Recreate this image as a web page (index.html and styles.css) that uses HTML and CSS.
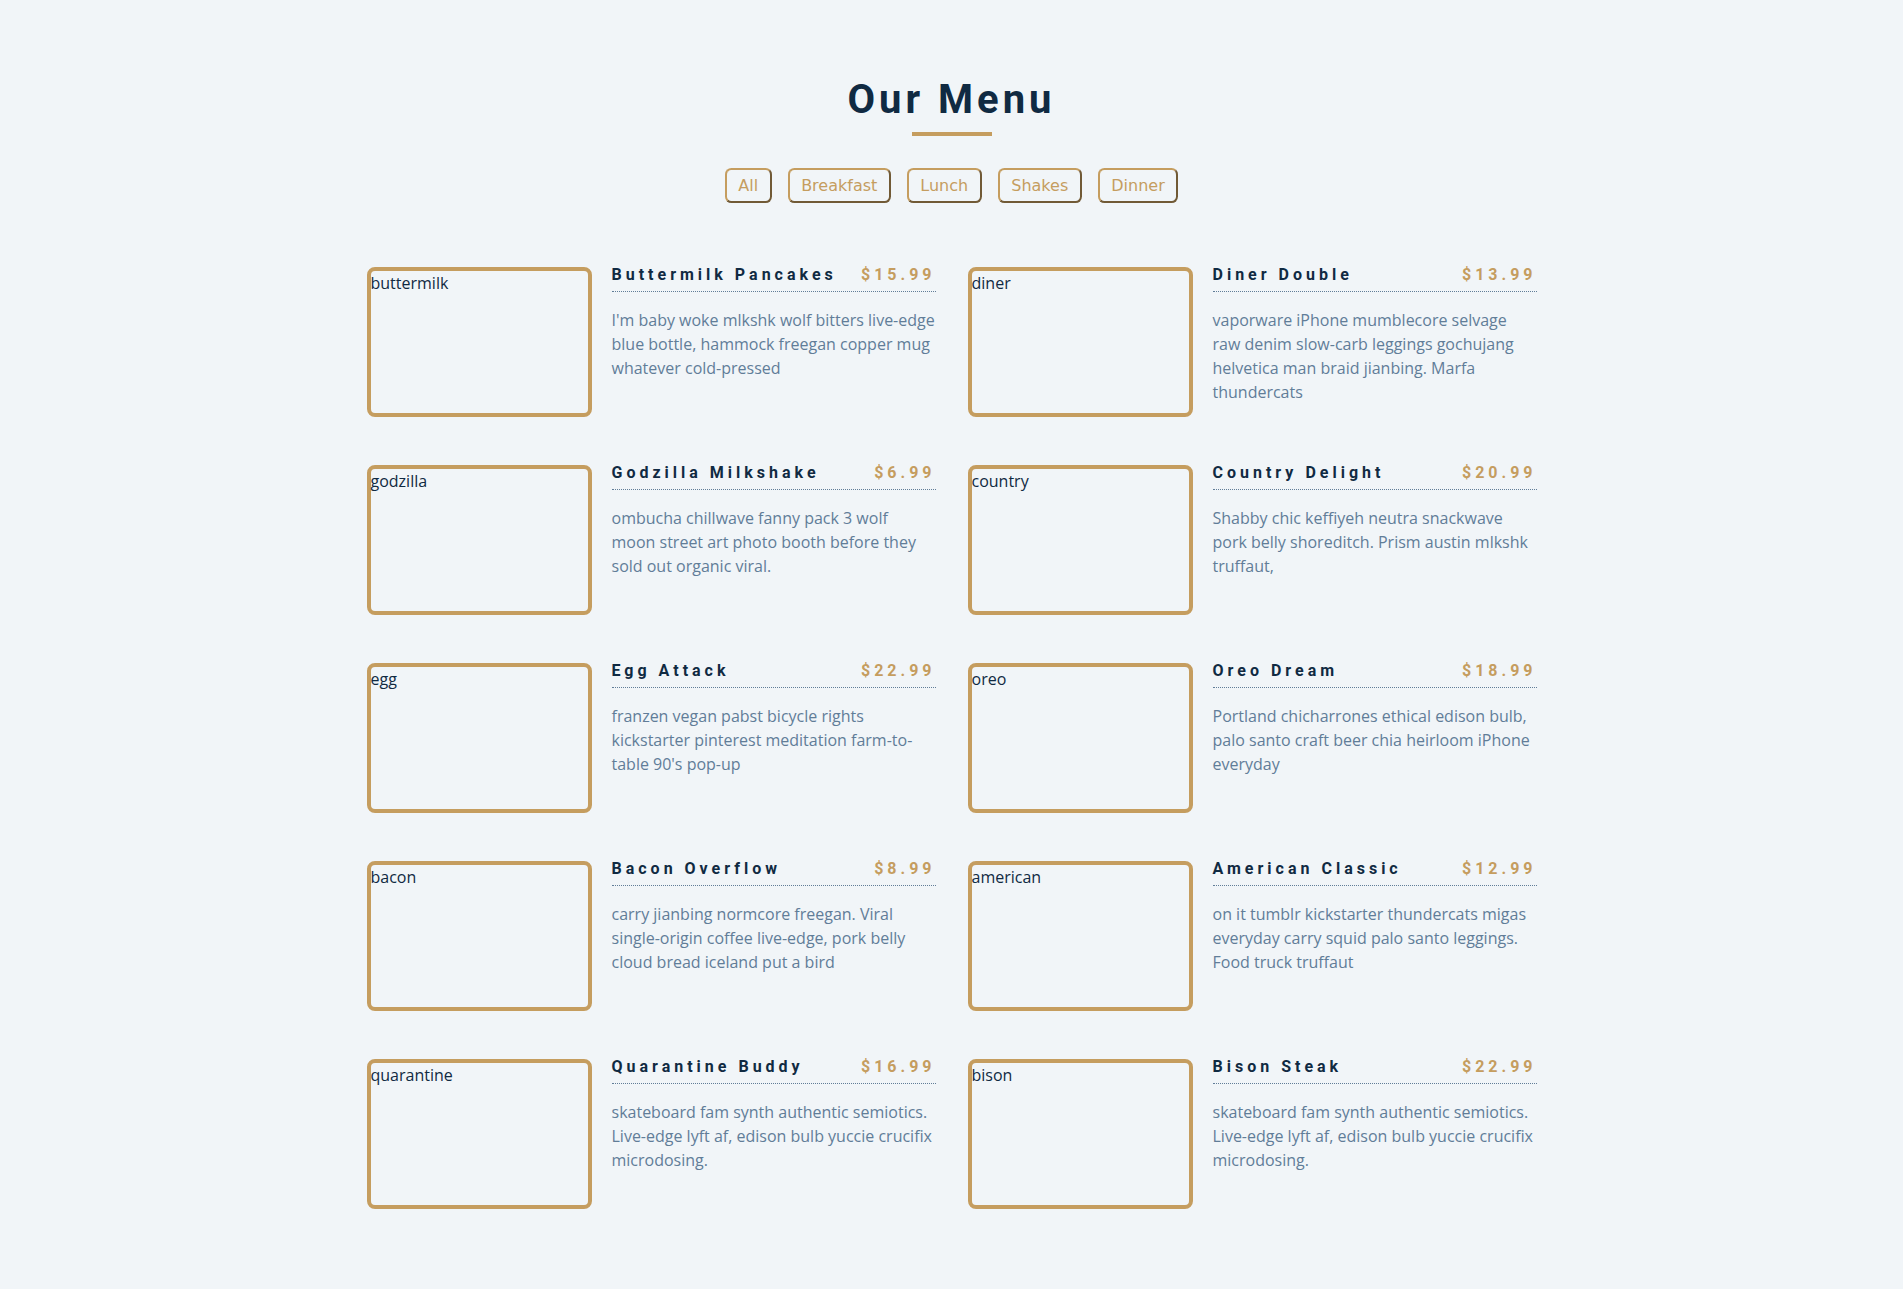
FILE: index.html
```html
<!DOCTYPE html>
<html lang="en">
<head>
<meta charset="utf-8">
<title>Menu</title>
<link rel="stylesheet" href="styles.css">
</head>
<body>
<main>
  <section class="menu section">
    <div class="title">
      <h2>Our Menu</h2>
      <div class="underline"></div>
    </div>
    <div class="btn-container">
      <button class="filter-btn" type="button">all</button>
      <button class="filter-btn" type="button">breakfast</button>
      <button class="filter-btn" type="button">lunch</button>
      <button class="filter-btn" type="button">shakes</button>
      <button class="filter-btn" type="button">dinner</button>
    </div>
    <div class="section-center">
      <article class="menu-item">
        <div class="photo">buttermilk</div>
        <div class="item-info">
          <header><h4>buttermilk pancakes</h4><h4 class="price">$15.99</h4></header>
          <p class="item-text">I'm baby woke mlkshk wolf bitters live-edge blue bottle, hammock freegan copper mug whatever cold-pressed</p>
        </div>
      </article>
      <article class="menu-item">
        <div class="photo">diner</div>
        <div class="item-info">
          <header><h4>diner double</h4><h4 class="price">$13.99</h4></header>
          <p class="item-text">vaporware iPhone mumblecore selvage raw denim slow-carb leggings gochujang helvetica man braid jianbing. Marfa thundercats</p>
        </div>
      </article>
      <article class="menu-item">
        <div class="photo">godzilla</div>
        <div class="item-info">
          <header><h4>godzilla milkshake</h4><h4 class="price">$6.99</h4></header>
          <p class="item-text">ombucha chillwave fanny pack 3 wolf moon street art photo booth before they sold out organic viral.</p>
        </div>
      </article>
      <article class="menu-item">
        <div class="photo">country</div>
        <div class="item-info">
          <header><h4>country delight</h4><h4 class="price">$20.99</h4></header>
          <p class="item-text">Shabby chic keffiyeh neutra snackwave pork belly shoreditch. Prism austin mlkshk truffaut,</p>
        </div>
      </article>
      <article class="menu-item">
        <div class="photo">egg</div>
        <div class="item-info">
          <header><h4>egg attack</h4><h4 class="price">$22.99</h4></header>
          <p class="item-text">franzen vegan pabst bicycle rights kickstarter pinterest meditation farm-to-table 90's pop-up</p>
        </div>
      </article>
      <article class="menu-item">
        <div class="photo">oreo</div>
        <div class="item-info">
          <header><h4>oreo dream</h4><h4 class="price">$18.99</h4></header>
          <p class="item-text">Portland chicharrones ethical edison bulb, palo santo craft beer chia heirloom iPhone everyday</p>
        </div>
      </article>
      <article class="menu-item">
        <div class="photo">bacon</div>
        <div class="item-info">
          <header><h4>bacon overflow</h4><h4 class="price">$8.99</h4></header>
          <p class="item-text">carry jianbing normcore freegan. Viral single-origin coffee live-edge, pork belly cloud bread iceland put a bird</p>
        </div>
      </article>
      <article class="menu-item">
        <div class="photo">american</div>
        <div class="item-info">
          <header><h4>american classic</h4><h4 class="price">$12.99</h4></header>
          <p class="item-text">on it tumblr kickstarter thundercats migas everyday carry squid palo santo leggings. Food truck truffaut</p>
        </div>
      </article>
      <article class="menu-item">
        <div class="photo">quarantine</div>
        <div class="item-info">
          <header><h4>quarantine buddy</h4><h4 class="price">$16.99</h4></header>
          <p class="item-text">skateboard fam synth authentic semiotics. Live-edge lyft af, edison bulb yuccie crucifix microdosing.</p>
        </div>
      </article>
      <article class="menu-item">
        <div class="photo">bison</div>
        <div class="item-info">
          <header><h4>bison steak</h4><h4 class="price">$22.99</h4></header>
          <p class="item-text">skateboard fam synth authentic semiotics. Live-edge lyft af, edison bulb yuccie crucifix microdosing.</p>
        </div>
      </article>
    </div>
  </section>
</main>
</body>
</html>
```

FILE: styles.css
```css
*, *::before, *::after {
  margin: 0;
  padding: 0;
  box-sizing: border-box;
}
body {
  font-family: "Open Sans", sans-serif;
  background: #f1f5f8;
  color: #102a42;
  line-height: 1.5;
  font-size: 1rem;
}
h2, h4 {
  font-family: Roboto, sans-serif;
  letter-spacing: 0.25rem;
  text-transform: capitalize;
  line-height: 1;
  margin-bottom: 0.75rem;
}
h2 {
  font-size: 2.5rem;
}
h4 {
  font-size: 1rem;
}
p {
  color: #617d98;
}
.section {
  padding: 5rem 0;
}
.title {
  text-align: center;
  margin-bottom: 2rem;
}
.underline {
  width: 5rem;
  height: 0.25rem;
  background: #c59d5f;
  margin-left: auto;
  margin-right: auto;
}
.btn-container {
  margin-bottom: 4rem;
  display: flex;
  justify-content: center;
}
.filter-btn {
  background: transparent;
  border: 2px outset #c59d5f;
  font-family: "DejaVu Sans", sans-serif;
  font-size: 16px;
  line-height: normal;
  text-transform: capitalize;
  margin: 0 0.5rem;
  letter-spacing: 0;
  padding: 0.375rem 0.72rem;
  color: #c59d5f;
  cursor: pointer;
  border-radius: 0.4rem;
}
.section-center {
  width: 95vw;
  margin: 0 auto;
  max-width: 1170px;
  display: grid;
  grid-template-columns: 1fr 1fr;
  gap: 3rem 2rem;
  justify-items: center;
}
.menu-item {
  display: grid;
  grid-template-columns: 225px 1fr;
  gap: 0 1.25rem;
  max-width: 40rem;
}
.photo {
  height: 150px;
  width: 100%;
  border: 0.25rem solid #c59d5f;
  border-radius: 0.5rem;
  font-size: 1rem;
  line-height: 1.5;
}
.item-info header {
  display: flex;
  justify-content: space-between;
  border-bottom: 0.5px dotted #617d98;
}
.item-info h4 {
  margin-bottom: 0.5rem;
}
.price {
  color: #c59d5f;
}
.item-text {
  margin-bottom: 0;
  padding-top: 1rem;
}
```
